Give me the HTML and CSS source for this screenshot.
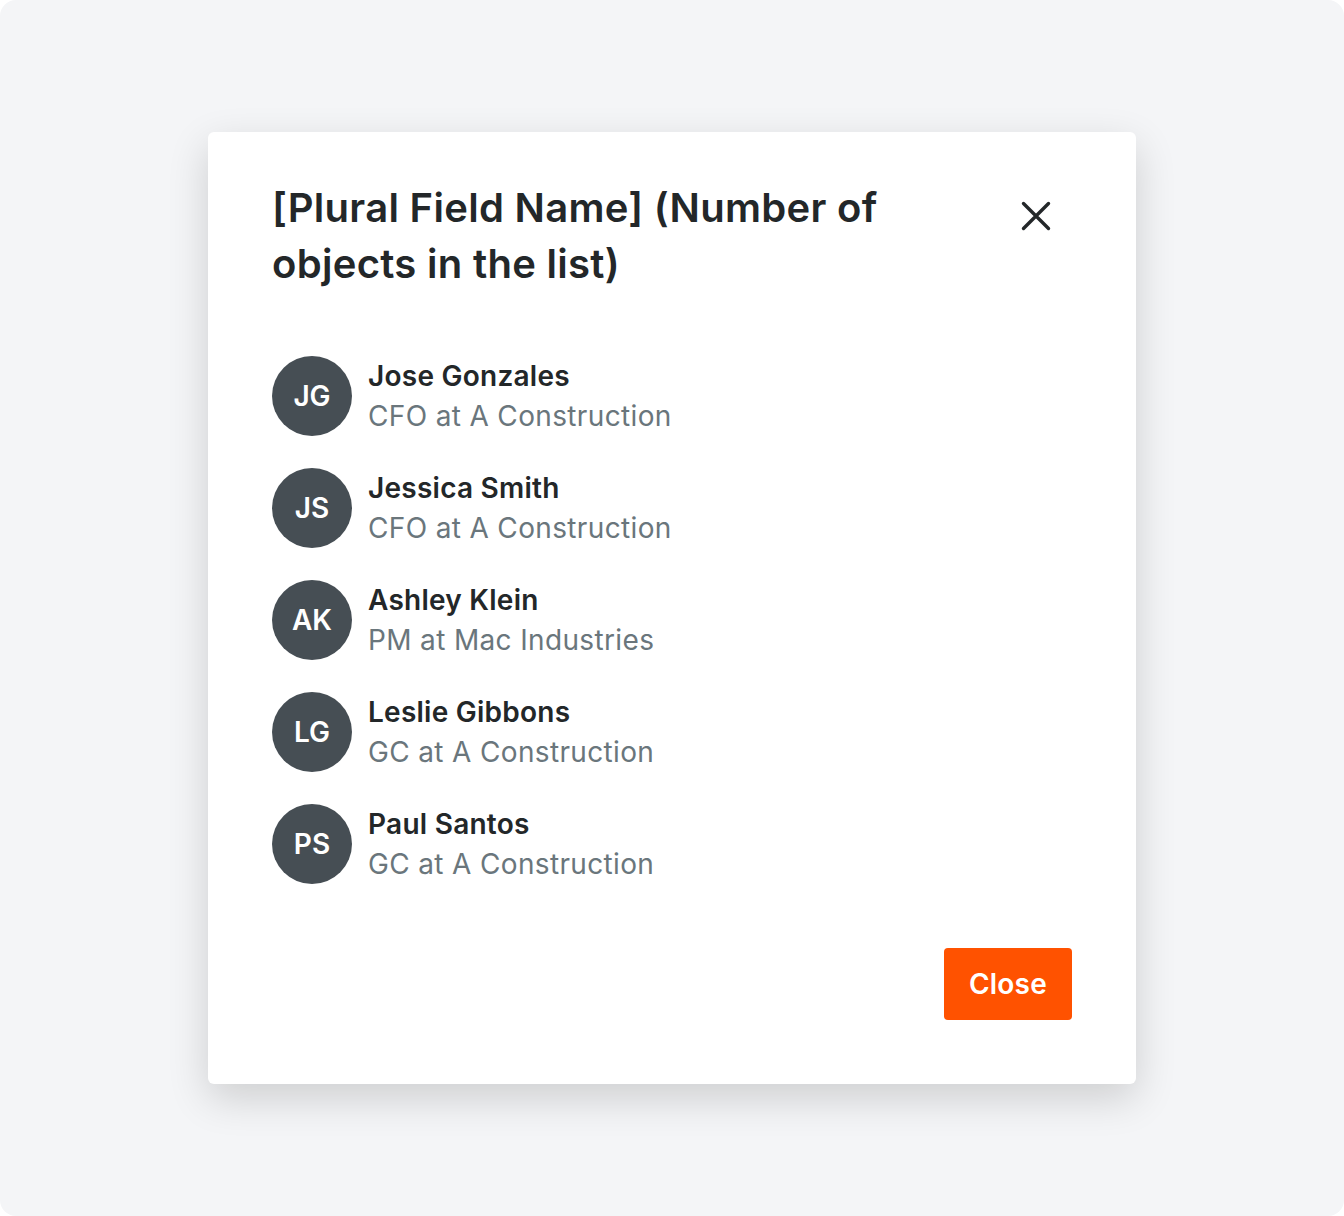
FILE: index.html
```html
<!DOCTYPE html>
<html lang="en">
<head>
<meta charset="utf-8">
<title>List modal</title>
<link rel="stylesheet" href="styles.css">
</head>
<body>
<div class="frame">
  <div class="modal" role="dialog" aria-labelledby="modal-title">
    <div class="modal-header">
      <h1 class="modal-title" id="modal-title">[Plural Field Name] (Number of objects in the list)</h1>
      <button class="icon-close" aria-label="Close">
        <svg width="30" height="30" viewBox="0 0 30 30" aria-hidden="true">
          <path d="M2.5 2.5 L27.5 27.5 M27.5 2.5 L2.5 27.5" stroke="#232729" stroke-width="3.4" stroke-linecap="round" fill="none"/>
        </svg>
      </button>
    </div>
    <ul class="people">
      <li class="person">
        <span class="avatar">JG</span>
        <div class="person-text">
          <span class="person-name">Jose Gonzales</span>
          <span class="person-role">CFO at A Construction</span>
        </div>
      </li>
      <li class="person">
        <span class="avatar">JS</span>
        <div class="person-text">
          <span class="person-name">Jessica Smith</span>
          <span class="person-role">CFO at A Construction</span>
        </div>
      </li>
      <li class="person">
        <span class="avatar">AK</span>
        <div class="person-text">
          <span class="person-name">Ashley Klein</span>
          <span class="person-role">PM at Mac Industries</span>
        </div>
      </li>
      <li class="person">
        <span class="avatar">LG</span>
        <div class="person-text">
          <span class="person-name">Leslie Gibbons</span>
          <span class="person-role">GC at A Construction</span>
        </div>
      </li>
      <li class="person">
        <span class="avatar">PS</span>
        <div class="person-text">
          <span class="person-name">Paul Santos</span>
          <span class="person-role">GC at A Construction</span>
        </div>
      </li>
    </ul>
    <div class="modal-footer">
      <button class="btn-primary">Close</button>
    </div>
  </div>
</div>
</body>
</html>
```

FILE: styles.css
```css
* { box-sizing: border-box; }

html, body {
  margin: 0;
  padding: 0;
  background: #ffffff;
}

body {
  font-family: Inter, "Noto Sans", "Liberation Sans", sans-serif;
  color: #232729;
}

.frame {
  width: 1344px;
  height: 1216px;
  background: #f4f5f7;
  border-radius: 16px;
  display: flex;
  justify-content: center;
  align-items: flex-start;
  padding-top: 132px;
}

.modal {
  width: 928px;
  background: #ffffff;
  border-radius: 6px;
  box-shadow: 0 14px 40px rgba(0, 0, 0, 0.16);
  padding: 48px 64px 64px 64px;
  display: flex;
  flex-direction: column;
}

.modal-header {
  display: flex;
  justify-content: space-between;
  align-items: flex-start;
  margin-bottom: 64px;
}

.modal-title {
  margin: 0;
  max-width: 690px;
  font-size: 40px;
  line-height: 56px;
  font-weight: 600;
  letter-spacing: 0.3px;
  color: #232729;
}

.icon-close {
  width: 48px;
  height: 48px;
  margin-top: 12px;
  margin-right: 12px;
  padding: 0;
  border: 0;
  background: transparent;
  display: flex;
  align-items: center;
  justify-content: center;
  cursor: pointer;
}

.people {
  list-style: none;
  margin: 0;
  padding: 0;
  display: flex;
  flex-direction: column;
  gap: 32px;
}

.person {
  display: flex;
  align-items: center;
  gap: 16px;
}

.avatar {
  width: 80px;
  height: 80px;
  flex: 0 0 80px;
  border-radius: 50%;
  background: #464e54;
  color: #ffffff;
  display: flex;
  align-items: center;
  justify-content: center;
  font-size: 28px;
  font-weight: 600;
}

.person-text {
  display: flex;
  flex-direction: column;
}

.person-name {
  font-size: 28px;
  line-height: 40px;
  font-weight: 600;
  letter-spacing: 0.25px;
  color: #232729;
}

.person-role {
  font-size: 28px;
  line-height: 40px;
  font-weight: 400;
  letter-spacing: 0.35px;
  color: #6a767c;
}

.modal-footer {
  display: flex;
  justify-content: flex-end;
  margin-top: 64px;
}

.btn-primary {
  height: 72px;
  padding: 0 24px;
  min-width: 128px;
  border: 0;
  border-radius: 4px;
  background: #ff5200;
  color: #ffffff;
  font-family: Inter, "Noto Sans", "Liberation Sans", sans-serif;
  font-size: 28px;
  font-weight: 600;
  letter-spacing: 0.2px;
  cursor: pointer;
}
```
